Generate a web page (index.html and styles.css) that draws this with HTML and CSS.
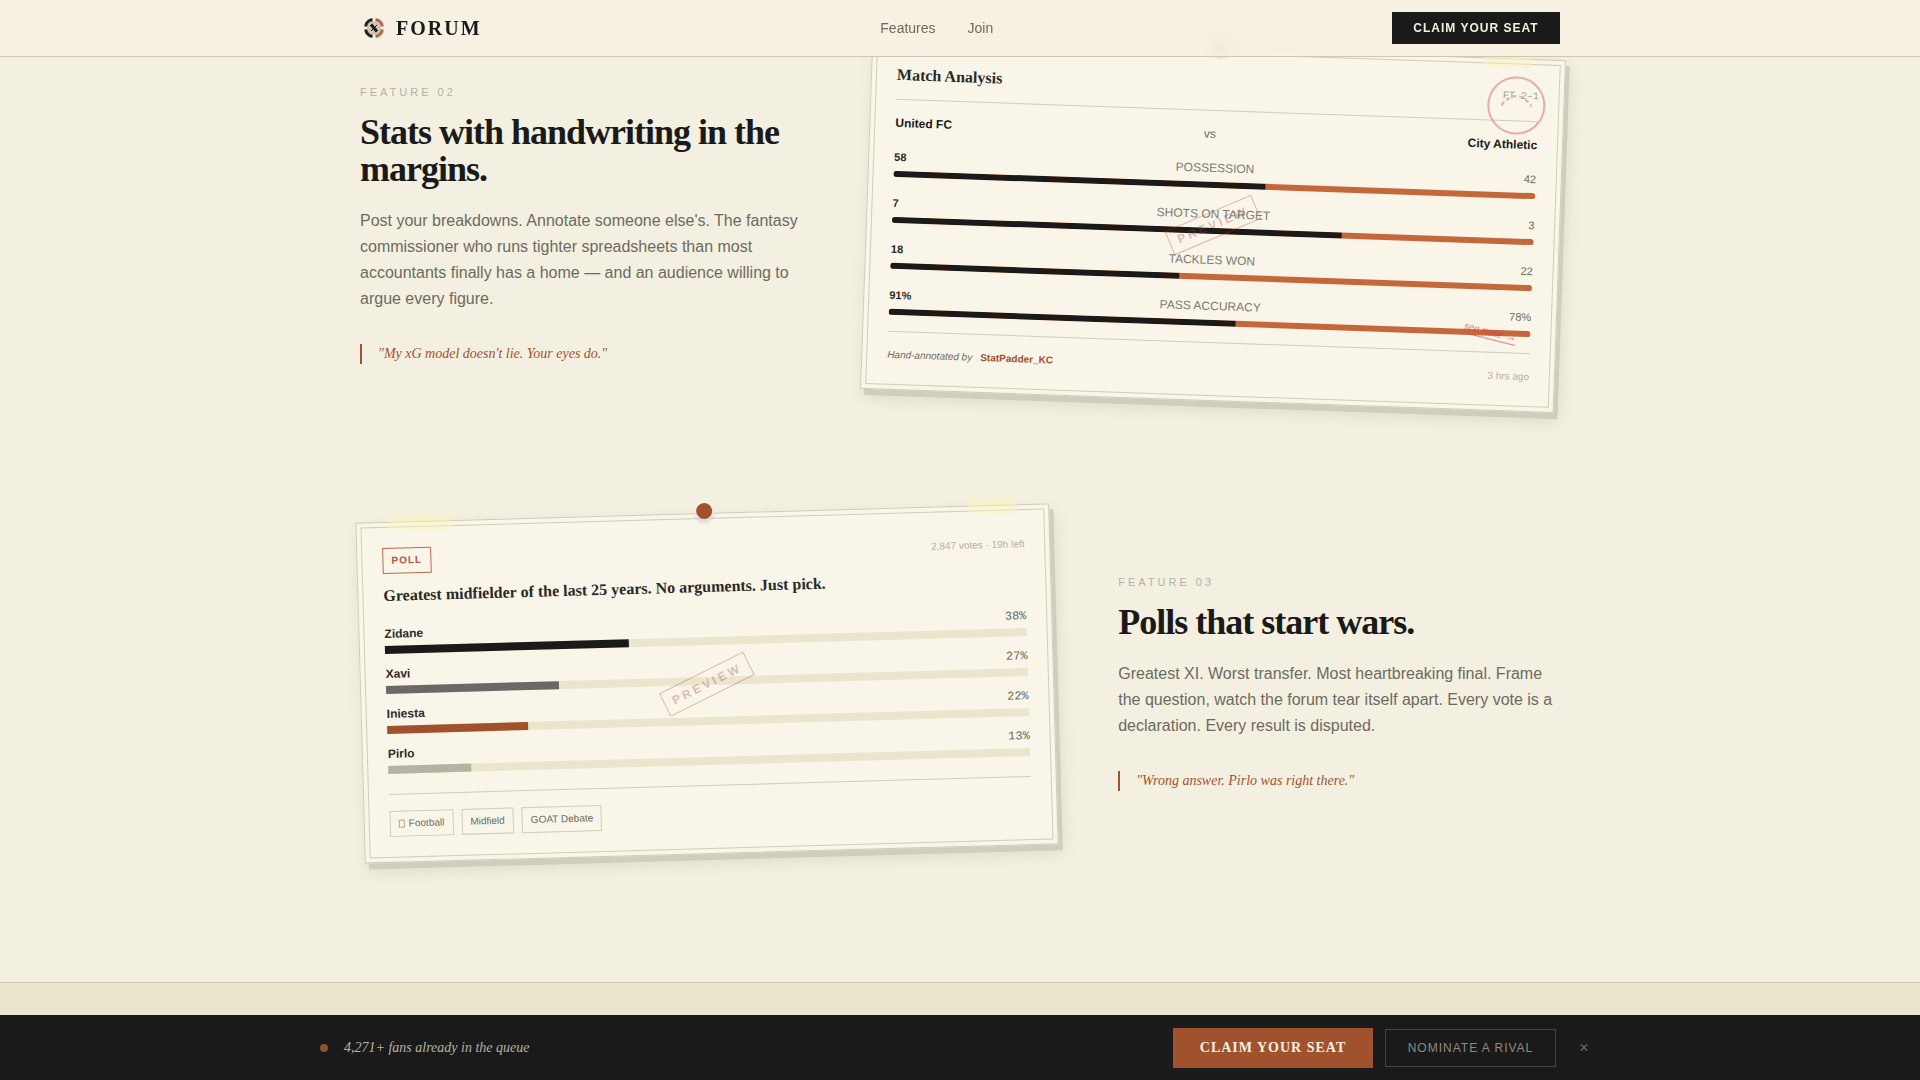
FILE: index.html
```html
<!DOCTYPE html>
<html lang="en">
<head>
<meta charset="utf-8">
<meta name="viewport" content="width=device-width, initial-scale=1">
<title>Forum</title>
<link rel="stylesheet" href="styles.css">
</head>
<body>
<header class="nav">
  <div class="nav-inner">
    <a class="brand" href="#">
      <svg class="brand-mark" viewBox="0 0 28 28" fill="none" aria-hidden="true">
        <circle cx="14" cy="14" r="7" fill="#cfc6b6"/>
        <g stroke-width="3">
          <path d="M12.500 5.600A8.500 8.500 0 0 0 5.600 12.500" stroke="#1c2620"/>
          <path d="M5.600 15.500A8.500 8.500 0 0 0 12.500 22.400" stroke="#1c2620"/>
          <path d="M15.500 5.600A8.500 8.500 0 0 1 22.400 12.500" stroke="#b5694a"/>
          <path d="M22.400 15.500A8.500 8.500 0 0 1 15.500 22.400" stroke="#b5694a"/>
        </g>
        <path d="M11 10.500l6 7" stroke="#1a1a1a" stroke-width="3"/>
        <path d="M17 11l-6 6" stroke="#1a1a1a" stroke-width="1"/>
      </svg>
      <span>FORUM</span>
    </a>
    <nav class="nav-links"><a href="#features">Features</a><a href="#join">Join</a></nav>
    <button class="btn-dark" type="button">Claim your seat</button>
  </div>
</header>

<main class="features" id="features">
  <section class="feature feature-text-first">
    <div class="copy">
      <p class="eyebrow">Feature 02</p>
      <h2>Stats with handwriting in the margins.</h2>
      <p class="body">Post your breakdowns. Annotate someone else's. The fantasy commissioner who runs tighter spreadsheets than most accountants finally has a home — and an audience willing to argue every figure.</p>
      <blockquote>"My xG model doesn't lie. Your eyes do."</blockquote>
    </div>
    <article class="card card-right">
      <span class="pin pin-green"></span>
      <span class="tape tape-left"></span><span class="tape tape-right"></span>
      <header class="match-head"><h3>Match Analysis</h3><span class="score">FT 2–1</span></header>
      <div class="teams"><strong>United FC</strong><span>vs</span><strong>City Athletic</strong></div>
      <div class="stats">
        <div class="stat"><div class="stat-row"><b>58</b><span>Possession</span><i>42</i></div><div class="split"><div style="width:58%"></div></div></div>
        <div class="stat"><div class="stat-row"><b>7</b><span>Shots on target</span><i>3</i></div><div class="split"><div style="width:70%"></div></div></div>
        <div class="stat"><div class="stat-row"><b>18</b><span>Tackles won</span><i>22</i></div><div class="split"><div style="width:45%"></div></div></div>
        <div class="stat"><div class="stat-row"><b>91%</b><span>Pass accuracy</span><i>78%</i></div><div class="split"><div style="width:54%"></div></div></div>
      </div>
      <footer class="match-foot"><em>Hand-annotated by</em><a href="#">StatPadder_KC</a><time>3 hrs ago</time></footer>
      <svg class="ring" viewBox="0 0 60 60" fill="none" stroke="#dc5060" aria-hidden="true">
        <circle cx="30" cy="30" r="28" stroke-width="2"/>
        <path d="M15 30Q30 11 45 30" stroke-width="2" stroke-dasharray="4 3"/>
      </svg>
      <svg class="note" viewBox="0 0 60 30" aria-hidden="true">
        <text x="4" y="12" transform="rotate(12 4 12)">see note →</text>
        <path d="M10 17L56 27" stroke="#dc3c50" fill="none"/>
      </svg>
      <span class="stamp">Preview</span>
    </article>
  </section>

  <section class="feature feature-card-first">
    <article class="card card-left">
      <span class="pin"></span>
      <span class="tape tape-left"></span><span class="tape tape-right"></span>
      <header class="poll-head"><span class="tag">Poll</span><span>2,847 votes · 19h left</span></header>
      <h3 class="question">Greatest midfielder of the last 25 years. No arguments. Just pick.</h3>
      <div class="options">
        <div class="option"><div class="option-row"><b>Zidane</b><span>38%</span></div><div class="track"><div class="ink" style="width:38%"></div></div></div>
        <div class="option"><div class="option-row"><b>Xavi</b><span>27%</span></div><div class="track"><div class="slate" style="width:27%"></div></div></div>
        <div class="option"><div class="option-row"><b>Iniesta</b><span>22%</span></div><div class="track"><div class="rust" style="width:22%"></div></div></div>
        <div class="option"><div class="option-row"><b>Pirlo</b><span>13%</span></div><div class="track"><div class="stone" style="width:13%"></div></div></div>
      </div>
      <footer class="chips"><span><i class="glyph"></i>Football</span><span>Midfield</span><span>GOAT Debate</span></footer>
      <span class="stamp">Preview</span>
    </article>
    <div class="copy">
      <p class="eyebrow">Feature 03</p>
      <h2>Polls that start wars.</h2>
      <p class="body">Greatest XI. Worst transfer. Most heartbreaking final. Frame the question, watch the forum tear itself apart. Every vote is a declaration. Every result is disputed.</p>
      <blockquote>"Wrong answer. Pirlo was right there."</blockquote>
    </div>
  </section>
</main>
<section class="join" id="join"></section>

<aside class="bar">
  <div class="bar-inner">
    <span class="dot"></span>
    <p>4,271+ fans already in the queue</p>
    <button class="btn-rust" type="button">Claim your seat</button>
    <button class="btn-ghost" type="button">Nominate a rival</button>
    <button class="close" type="button" aria-label="Dismiss">×</button>
  </div>
</aside>
</body>
</html>
```
FILE: styles.css
```css
:root {
  --paper: #f4f0e1;
  --card: #f9f5e8;
  --ink: #1a1a1a;
  --muted: #6b6b60;
  --faint: #b5b2a2;
  --line: #d0ccba;
  --rust: #a0522d;
  --sans: "Liberation Sans", Arial, sans-serif;
  --serif: "Liberation Serif", "Times New Roman", serif;
  --mono: "Liberation Mono", "Courier New", monospace;
}
* { box-sizing: border-box; }
body { margin: 0; min-height: 100vh; display: flex; flex-direction: column; background: var(--paper); color: var(--ink); font-family: var(--sans); }
h2, h3, p, blockquote { margin: 0; }
a { color: inherit; text-decoration: none; }
button { font-family: var(--sans); cursor: pointer; border-radius: 0; }

.nav { position: fixed; z-index: 10; top: 0; left: 0; right: 0; background: rgba(246, 240, 226, .94); backdrop-filter: blur(8px); border-bottom: 1px solid #cdc7b4; }
.nav-inner { max-width: 1200px; height: 56px; margin: 0 auto; display: flex; align-items: center; justify-content: space-between; }
.brand { display: flex; align-items: center; gap: 8px; font: bold 20px/24px var(--serif); letter-spacing: 2px; }
.brand-mark { width: 28px; height: 28px; }
.nav-links { display: flex; gap: 32px; font-size: 14px; color: var(--muted); }
.btn-dark { min-width: 168px; height: 32px; padding: 0 16px; border: 0; background: var(--ink); color: var(--paper); font-size: 12px; font-weight: bold; letter-spacing: 1px; text-transform: uppercase; }

.features { width: 100%; max-width: 1200px; margin: 0 auto; padding: 48px 0 128px; display: flex; flex-direction: column; gap: 112px; }
.feature { display: grid; gap: 64px; align-items: center; }
.feature-text-first { grid-template-columns: 7fr 11fr; }
.feature-card-first { grid-template-columns: 11fr 7fr; }
.eyebrow { margin-bottom: 16px; font-size: 11px; line-height: 12px; letter-spacing: 3px; color: var(--faint); text-transform: uppercase; }
.copy h2 { margin-bottom: 20px; font: bold 36px/37px var(--serif); letter-spacing: -1px; }
.body { margin-bottom: 32px; font-size: 16px; line-height: 26px; color: var(--muted); }
blockquote { padding-left: 16px; border-left: 2px solid var(--rust); font: italic 14px/20px var(--serif); color: var(--rust); }

.card { position: relative; padding: 25px; background: var(--card); border: 1px solid var(--line); box-shadow: 4px 6px 0 #d0cdbd, 4px 8px 16px rgba(60, 60, 30, .12); }
.card::before { content: ""; position: absolute; inset: 4px; border: 1px solid var(--line); pointer-events: none; }
.card-right { transform: rotate(2deg); }
.card-left { transform: rotate(-1.6deg); }
.card h3 { font: bold 16px/24px var(--serif); color: #2a2a28; }
.pin { position: absolute; z-index: 2; top: -11px; left: 50%; width: 16px; height: 16px; margin-left: -6px; border-radius: 50%; background: var(--rust); box-shadow: 0 0 0 2px rgba(255, 255, 255, .4), 0 3px 4px rgba(0, 0, 0, .2); }
.pin-green { background: #2c4a34; }
.tape { position: absolute; background: rgba(251, 243, 185, .45); }
.tape-left { top: -8px; left: 32px; width: 64px; height: 16px; transform: rotate(1deg); }
.tape-right { top: -8px; right: 32px; width: 48px; height: 16px; transform: rotate(1deg); }
.card-right .tape-right { transform: rotate(-2deg); }
.stamp { position: absolute; top: 50%; left: 50%; padding: 4px 8px; border: 1px solid; color: rgba(160, 60, 60, .33); font-size: 12px; line-height: 16px; font-weight: bold; letter-spacing: 3px; text-transform: uppercase; transform: translate(-50%, -50%) rotate(-25deg); }

.match-head { display: flex; align-items: center; justify-content: space-between; padding-bottom: 12px; border-bottom: 1px solid var(--line); }
.score { font: 10px/16px var(--mono); color: #a5a294; }
.teams { display: flex; justify-content: space-between; align-items: center; padding: 16px 0 20px; font-size: 12px; line-height: 14px; }
.teams span, .stat-row { color: var(--muted); }
.stats { display: grid; gap: 19px; }
.stat-row { display: flex; justify-content: space-between; font-size: 11px; line-height: 15px; margin-bottom: 6px; }
.stat-row span { font-size: 12px; text-transform: uppercase; color: #7c7b70; }
.stat-row b { color: #2a2a28; }
.stat-row i { font-style: normal; }
.split { height: 6px; background: #c4673a; border-radius: 3px; overflow: hidden; }
.split div { height: 100%; background: var(--ink); }
.match-foot { display: flex; align-items: center; gap: 8px; margin-top: 16px; padding-top: 15px; padding-bottom: 1px; border-top: 1px solid var(--line); font-size: 10px; line-height: 16px; color: var(--muted); }
.match-foot a { color: var(--rust); font-weight: bold; }
.match-foot time { margin-left: auto; color: var(--faint); }
.ring { position: absolute; top: 16px; right: 17px; width: 60px; height: 60px; opacity: .45; }
.note { position: absolute; right: 36px; bottom: 62px; width: 60px; height: 30px; overflow: visible; opacity: .65; }
.note text { font: italic 12px var(--serif); fill: #dc3c50; }

.poll-head { display: flex; align-items: center; justify-content: space-between; font-size: 10px; color: var(--faint); }
.tag { padding: 0 8px; border: 1px solid #b96a4c; font-size: 10px; line-height: 24px; font-weight: bold; letter-spacing: 1px; color: #b0573a; text-transform: uppercase; }
.question { margin: 10px 0 18px; }
.options { display: grid; gap: 12px; }
.option-row { display: flex; justify-content: space-between; margin-bottom: 4px; font-size: 12px; line-height: 16px; }
.option-row b { color: #2a2a28; }
.option-row span { font-family: var(--mono); color: var(--muted); }
.track { height: 8px; background: #ebe5cd; }
.track div { height: 100%; }
.ink { background: var(--ink); }
.slate { background: #6b6868; }
.rust { background: var(--rust); }
.stone { background: #b5b2a2; }
.chips { display: flex; gap: 8px; margin-top: 20px; padding-top: 16px; border-top: 1px solid var(--line); }
.chips span { display: flex; align-items: center; gap: 4px; padding: 0 8px; border: 1px solid var(--line); font-size: 10px; line-height: 24px; color: var(--muted); }
.glyph { width: 6px; height: 8px; border: 1px solid #a9a698; }

.join { flex: 1; border-top: 1px solid #cdc7b4; background: #ebe4cc; }
.bar { position: fixed; z-index: 10; left: 0; right: 0; bottom: 0; background: var(--ink); }
.bar-inner { max-width: 1280px; height: 65px; margin: 0 auto; display: flex; align-items: center; }
.dot { width: 8px; height: 8px; margin-right: 16px; border-radius: 50%; background: #90502f; }
.bar p { flex: 1; font: italic 14px/20px var(--serif); color: #b5b2a2; }
.btn-rust { min-width: 200px; height: 40px; padding: 0 20px; margin-right: 12px; border: 0; background: var(--rust); color: var(--paper); font: bold 14px/20px var(--serif); letter-spacing: 1px; text-transform: uppercase; }
.btn-ghost { min-width: 171px; height: 38px; padding: 0 16px; margin-right: 12px; border: 1px solid #444442; background: transparent; color: #8d8b80; font-size: 12px; letter-spacing: 1px; text-transform: uppercase; }
.close { width: 32px; height: 32px; padding: 0; border: 0; background: transparent; color: #6b6a62; font-size: 16px; line-height: 32px; }
```
